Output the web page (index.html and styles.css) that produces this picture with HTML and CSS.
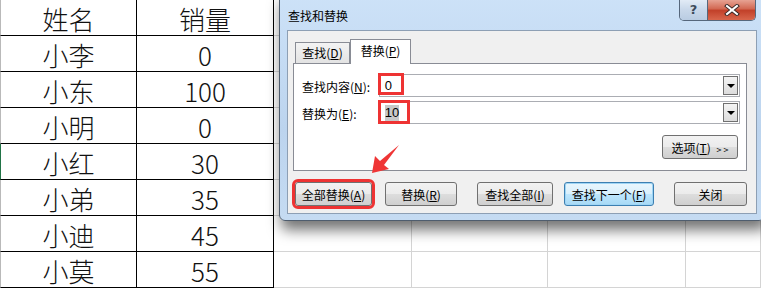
FILE: index.html
```html
<!DOCTYPE html>
<html lang="zh-CN">
<head>
    <meta charset="UTF-8">
    <title>查找和替换</title>
    <link rel="stylesheet" href="styles.css">
</head>
<body>
    <!-- worksheet behind the dialog -->
    <div class="sheet">
        <div class="c n head">姓名</div><div class="c v head">销量</div><div class="c"></div><div class="c"></div><div class="c"></div><div class="c"></div>
        <div class="c n">小李</div><div class="c v">0</div><div class="c"></div><div class="c"></div><div class="c"></div><div class="c"></div>
        <div class="c n">小东</div><div class="c v">100</div><div class="c"></div><div class="c"></div><div class="c"></div><div class="c"></div>
        <div class="c n">小明</div><div class="c v">0</div><div class="c"></div><div class="c"></div><div class="c"></div><div class="c"></div>
        <div class="c n sel">小红</div><div class="c v">30</div><div class="c"></div><div class="c"></div><div class="c"></div><div class="c"></div>
        <div class="c n">小弟</div><div class="c v">35</div><div class="c"></div><div class="c"></div><div class="c"></div><div class="c"></div>
        <div class="c n">小迪</div><div class="c v">45</div><div class="c"></div><div class="c"></div><div class="c"></div><div class="c"></div>
        <div class="c n">小莫</div><div class="c v">55</div><div class="c"></div><div class="c"></div><div class="c"></div><div class="c"></div>
    </div>

    <!-- find & replace window -->
    <div class="dialog">
        <div class="titlebar">
            <span class="title">查找和替换</span>
            <div class="caption-btns">
                <span class="cap help">?</span>
                <span class="cap close">
                    <svg width="16" height="12" viewBox="0 0 16 12">
                        <path d="M3 2 L13 10 M13 2 L3 10" stroke="#3b2a28" stroke-width="4" stroke-linecap="square"/>
                        <path d="M3 2 L13 10 M13 2 L3 10" stroke="#fff" stroke-width="2" stroke-linecap="square"/>
                    </svg>
                </span>
            </div>
        </div>
        <div class="client">
            <div class="tabs">
                <span class="tab">查找(<u>D</u>)</span>
                <span class="tab active">替换(<u>P</u>)</span>
            </div>
            <div class="panel">
                <div class="field">
                    <label>查找内容(<u>N</u>):</label>
                    <div class="combo">
                        <span class="val">0</span>
                        <span class="drop"></span>
                        <span class="mark mark-find"></span>
                    </div>
                </div>
                <div class="field">
                    <label>替换为(<u>E</u>):</label>
                    <div class="combo">
                        <span class="val picked">10</span>
                        <span class="drop"></span>
                        <span class="mark mark-repl"></span>
                    </div>
                </div>
                <div class="opts">
                    <button class="btn btn-opts">选项(<u>T</u>) <span class="more">&gt; &gt;</span></button>
                </div>
            </div>
            <div class="actions">
                <button class="btn btn-all">全部替换(<u>A</u>)</button>
                <button class="btn btn-one">替换(<u>R</u>)</button>
                <button class="btn btn-findall">查找全部(<u>I</u>)</button>
                <button class="btn btn-next">查找下一个(<u>F</u>)</button>
                <button class="btn btn-close">关闭</button>
            </div>
        </div>
    </div>

    <!-- red annotation arrow -->
    <svg class="arrow" width="761" height="290" viewBox="0 0 761 290">
        <polygon points="372,173 375,156 380,161 399,145 384,165 389,169" fill="#ef3535"/>
    </svg>
</body>
</html>
```

FILE: styles.css
```css
body {
    margin: 0;
    width: 761px;
    height: 290px;
    overflow: hidden;
    position: relative;
    background-color: #fff;
    font-family: "Noto Sans CJK SC", sans-serif;
}
/* worksheet grid */
.sheet {
    display: grid;
    grid-template-columns: 137px 137px 138px 136px 138px 75px;
    grid-auto-rows: 36px;
}
.c {
    box-sizing: border-box;
    border-right: 1px solid #d4d4d4;
    border-bottom: 1px solid #d4d4d4;
}
.n, .v {
    display: flex;
    align-items: center;
    justify-content: center;
    border-right-color: #000;
    border-bottom-color: #000;
    font-family: "Noto Sans CJK SC", sans-serif;
    font-size: 26px;
    font-weight: 300;
    color: #111;
    padding-top: 1px;
}
.n {
    border-left: 1px solid #b9b9b9;
}
.n.sel {
    border-left-color: #217346;
}
/* dialog window */
.dialog {
    position: absolute;
    left: 279px;
    top: -8px;
    width: 486px;
    height: 229px;
    box-sizing: border-box;
    border: 1px solid #4f5d6e;
    border-radius: 6px;
    background: linear-gradient(to bottom, #cde2f8, #bcd4ee 60%, #c5dbf2);
    box-shadow: 2px 9px 14px rgba(0,0,0,0.55);
    font-size: 12px;
    color: #000;
}
.titlebar {
    display: flex;
    height: 37px;
}
.title {
    padding: 16px 0 0 8px;
    line-height: 14px;
}
.caption-btns {
    display: flex;
    margin: 6px 8px 0 auto;
    height: 21px;
    border: 1px solid #56677c;
    border-top: none;
    border-radius: 0 0 5px 5px;
    overflow: hidden;
}
.cap {
    display: flex;
    align-items: center;
    justify-content: center;
    height: 21px;
}
.help {
    width: 27px;
    border-right: 1px solid #56677c;
    background: linear-gradient(to bottom, #e4edf7, #c9d8ea 50%, #b9cce2);
    color: #3d4a5a;
    font-family: "DejaVu Sans", sans-serif;
    font-weight: bold;
    font-size: 13px;
}
.close {
    width: 47px;
    background: linear-gradient(to bottom, #e9a99a, #d36b55 45%, #c2412a 55%, #d8664c);
}
.client {
    box-sizing: border-box;
    width: 470px;
    height: 184px;
    margin-left: 7px;
    border: 1px solid #8d9fb4;
    background-color: #f0f0f0;
}
.tabs {
    display: flex;
    align-items: flex-end;
    height: 32px;
    margin-left: 7px;
    position: relative;
    z-index: 1;
}
.tab {
    box-sizing: border-box;
    height: 21px;
    width: 55px;
    border: 1px solid #898c95;
    border-bottom: none;
    background: linear-gradient(to bottom, #f3f3f3, #e3e3e3);
    text-align: center;
    line-height: 20px;
}
.tab.active {
    width: 61px;
    height: 25px;
    margin-bottom: -1px;
    background: #fff;
    line-height: 22px;
}
.panel {
    box-sizing: border-box;
    width: 454px;
    height: 108px;
    margin-left: 5px;
    border: 1px solid #898c95;
    background-color: #fff;
    padding: 10px 6px 0 8px;
}
.field {
    display: flex;
    align-items: center;
    margin-bottom: 4px;
}
.field label {
    width: 77px;
    padding-top: 1px;
}
.combo {
    position: relative;
    display: flex;
    align-items: center;
    box-sizing: border-box;
    width: 362px;
    height: 23px;
    border: 1px solid #abadb3;
    padding-left: 5px;
}
.val {
    font-family: "Liberation Sans", sans-serif;
    font-size: 13px;
    line-height: 16px;
}
.val.picked {
    background-color: #c8c8c8;
}
.drop {
    margin-left: auto;
    margin-right: 1px;
    width: 15px;
    height: 19px;
    box-sizing: border-box;
    border: 1px solid #707070;
    background: linear-gradient(to bottom, #f4f4f4, #dcdcdc);
    position: relative;
}
.drop::after {
    content: "";
    position: absolute;
    left: 3px;
    top: 7px;
    border-left: 4px solid transparent;
    border-right: 4px solid transparent;
    border-top: 4px solid #000;
}
/* red annotation boxes */
.mark {
    position: absolute;
    left: -2px;
    top: -2px;
    border: 3px solid #ee3333;
}
.mark-find {
    width: 20px;
    height: 16px;
}
.mark-repl {
    width: 26px;
    height: 18px;
}
.opts {
    display: flex;
    justify-content: flex-end;
    margin-top: 11px;
    padding-right: 2px;
}
.btn {
    box-sizing: border-box;
    height: 24px;
    border: 1px solid #707070;
    border-radius: 3px;
    background: linear-gradient(to bottom, #f2f2f2, #ebebeb 50%, #dddddd 51%, #cfcfcf);
    font-family: "Noto Sans CJK SC", sans-serif;
    font-size: 12px;
    color: #000;
    padding: 0;
}
.btn-opts {
    width: 76px;
}
.more {
    font-size: 9px;
    margin-left: 3px;
}
.actions {
    display: flex;
    margin: 11px 0 0 7px;
}
.btn-all {
    width: 77px;
    outline: 3px solid #ee3333;
}
.btn-one {
    width: 72px;
    margin-left: 13px;
}
.btn-findall {
    width: 76px;
    margin-left: 20px;
}
.btn-next {
    width: 90px;
    margin-left: 11px;
    border-color: #3c7fb1;
    box-shadow: inset 0 0 0 1px #9fd5f5;
    background: linear-gradient(to bottom, #eaf6fd, #d9f0fc 50%, #bee6fd 51%, #a7d9f5);
}
.btn-close {
    width: 73px;
    margin-left: 20px;
}
.arrow {
    position: absolute;
    left: 0;
    top: 0;
    pointer-events: none;
}
```
